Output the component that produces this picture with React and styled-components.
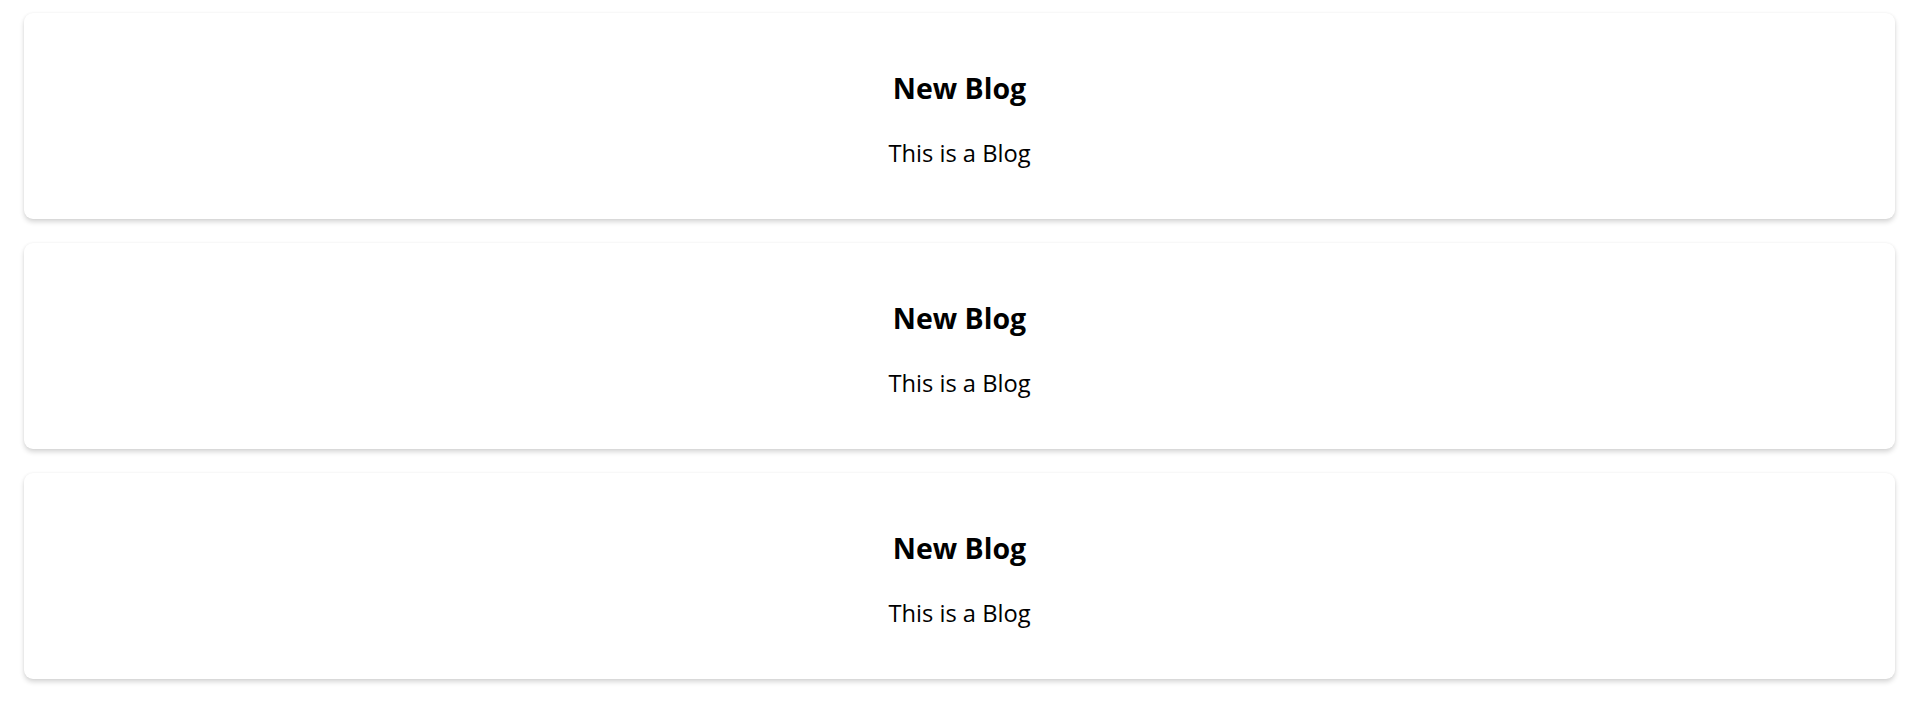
import React from "react";
import styled, { createGlobalStyle } from "styled-components";

const GlobalStyle = createGlobalStyle`
  html, body { margin: 0; padding: 0; background: #ffffff; }
  body { font-family: "Open Sans", "Noto Sans", sans-serif; color: #000; }
`;

const Page = styled.main`
  display: flex;
  flex-direction: column;
  gap: 24px;
  padding: 13px 24px 24px;
`;

const Card = styled.article`
  display: flex;
  flex-direction: column;
  align-items: center;
  height: 206px;
  box-sizing: border-box;
  padding-top: 58px;
  background: #ffffff;
  border-radius: 9px;
  box-shadow: 0 3px 5px rgba(0, 0, 0, 0.16), 0 0 3px rgba(0, 0, 0, 0.05);
`;

const Title = styled.h3`
  margin: 0 0 33px;
  font-size: 28.5px;
  line-height: 34px;
  font-weight: 700;
  color: #000;
`;

const Body = styled.p`
  margin: 0;
  font-size: 23.7px;
  line-height: 30px;
  font-weight: 400;
  color: #000;
`;

const blogs = [
  { id: 1, title: "New Blog", body: "This is a Blog" },
  { id: 2, title: "New Blog", body: "This is a Blog" },
  { id: 3, title: "New Blog", body: "This is a Blog" },
];

export default function App() {
  return (
    <>
      <GlobalStyle />
      <Page>
        {blogs.map((b) => (
          <Card key={b.id}>
            <Title>{b.title}</Title>
            <Body>{b.body}</Body>
          </Card>
        ))}
      </Page>
    </>
  );
}
